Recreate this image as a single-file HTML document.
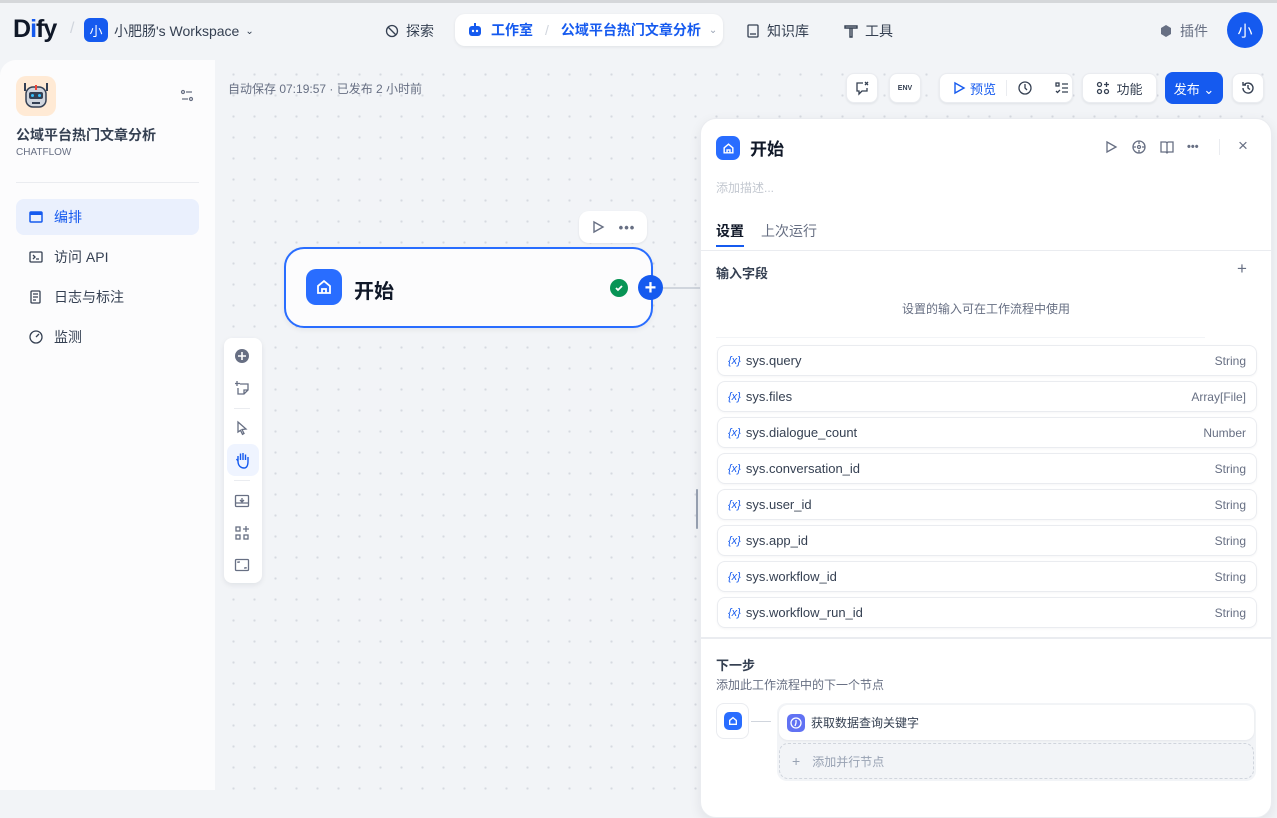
<!DOCTYPE html>
<html><head><meta charset="utf-8"><style>
*{box-sizing:border-box;margin:0;padding:0}
body{width:1277px;height:790px;overflow:hidden;background:#f2f4f7;font-family:"Liberation Sans","Noto Sans CJK SC",sans-serif;color:#101828;position:relative;font-size:13px}
.abs{position:absolute}
.topline{left:0;top:0;width:1277px;height:3px;background:#d5d7da}
.canvas{left:215px;top:60px;width:1062px;height:730px;background-color:#f2f4f7;background-image:radial-gradient(#d6d9e0 1px,transparent 1.3px);background-size:21px 21px;background-position:8px 4px}
.side{left:0;top:60px;width:215px;height:730px;background:#fcfcfd;border-top-left-radius:16px}
.btn{background:#fff;border-radius:8px;box-shadow:0 1px 2px rgba(16,24,40,.08);border:1px solid #eaecf0;display:flex;align-items:center;justify-content:center}
.panel{left:700px;top:118px;width:572px;height:700px;background:#fff;border-radius:16px;border:1px solid #eaecf0;box-shadow:0 4px 12px rgba(16,24,40,.08)}
.row{position:absolute;left:16px;width:540px;height:31px;border:1px solid #eaecf0;border-radius:8px;box-shadow:0 1px 2px rgba(16,24,40,.04);display:flex;align-items:center;padding:0 10px;font-size:13px;color:#354052}
.row .x{color:#155aef;font-size:11px;margin-right:5px;font-style:italic}
.row .t{margin-left:auto;color:#676f83;font-size:12px}
.nav{display:flex;align-items:center;gap:6px;font-size:14px;color:#354052}
.menu{position:absolute;left:16px;width:183px;height:36px;border-radius:8px;display:flex;align-items:center;padding-left:12px;font-size:14px;color:#354052;gap:10px}
</style></head><body>
<div class="abs topline"></div>
<div class="abs" style="left:13px;top:15px;font:bold 25px 'Liberation Sans',sans-serif;letter-spacing:-1px;color:#101828">D<span style="color:#155aef">i</span>fy</div>
<div class="abs" style="left:70px;top:20px;color:#d0d5dd;font-size:16px">/</div>
<div class="abs" style="left:84px;top:18px;width:24px;height:24px;border-radius:6px;background:#155aef;color:#fff;font-size:13px;display:flex;align-items:center;justify-content:center">小</div>
<div class="abs nav" style="left:114px;top:21px">小肥肠's Workspace <span style="font-size:10px">⌄</span></div>
<div class="abs nav" style="left:384px;top:21px"><svg width="16" height="16" viewBox="0 0 16 16" fill="none" stroke="#354052" stroke-width="1.3"><circle cx="8" cy="8" r="5.5"/><path d="M4 4l8 8"/></svg>探索</div>
<div class="abs" style="left:455px;top:14px;width:268px;height:32px;background:#fff;border-radius:10px;box-shadow:0 1px 3px rgba(16,24,40,.08);display:flex;align-items:center;padding-left:12px;gap:8px;color:#155aef;font-size:14px;font-weight:bold">
<svg width="16" height="16" viewBox="0 0 16 16"><rect x="2" y="4" width="12" height="10" rx="3" fill="#155aef"/><rect x="7" y="1" width="2" height="3" fill="#155aef"/><circle cx="6" cy="9" r="1.2" fill="#fff"/><circle cx="10" cy="9" r="1.2" fill="#fff"/></svg>工作室<span style="color:#d0d5dd;font-weight:normal;margin:0 4px">/</span>公域平台热门文章分析<span style="color:#98a2b3;font-size:10px;font-weight:normal">⌄</span></div>
<div class="abs nav" style="left:745px;top:21px"><svg width="16" height="16" viewBox="0 0 16 16" fill="none" stroke="#354052" stroke-width="1.3"><rect x="3" y="2" width="10" height="12" rx="1"/><path d="M5 11h6"/></svg>知识库</div>
<div class="abs nav" style="left:843px;top:21px"><svg width="16" height="16" viewBox="0 0 16 16" fill="none" stroke="#354052" stroke-width="1.4"><path d="M2 3h12v2H2zM7 5v9h2V5"/></svg>工具</div>
<div class="abs nav" style="left:1158px;top:21px;color:#676f83"><svg width="16" height="16" viewBox="0 0 16 16"><path d="M8 2l5 3v6l-5 3-5-3V5z" fill="#676f83"/></svg>插件</div>
<div class="abs" style="left:1227px;top:12px;width:36px;height:36px;border-radius:50%;background:#155aef;color:#fff;display:flex;align-items:center;justify-content:center;font-size:15px">小</div>

<div class="abs canvas"></div>
<div class="abs side"></div>
<div class="abs" style="left:16px;top:76px;width:40px;height:40px;border-radius:10px;background:#ffead5;display:flex;align-items:center;justify-content:center">
<svg width="28" height="30" viewBox="0 0 28 30"><rect x="4" y="6" width="20" height="20" rx="7" fill="#d0d5dd" stroke="#344054" stroke-width="1.5"/><rect x="7" y="11" width="14" height="7" rx="2" fill="#344054"/><circle cx="10.5" cy="14.5" r="1.5" fill="#36bffa"/><circle cx="17.5" cy="14.5" r="1.5" fill="#36bffa"/><rect x="13" y="4" width="2" height="5" fill="#f04438"/><rect x="2" y="2" width="2" height="8" fill="#344054"/><rect x="24" y="2" width="2" height="8" fill="#344054"/><rect x="10" y="21" width="8" height="2" fill="#344054"/></svg></div>
<svg class="abs" style="left:179px;top:88px" width="16" height="16" viewBox="0 0 16 16" fill="none" stroke="#676f83" stroke-width="1.2"><circle cx="4" cy="4" r="1.5"/><path d="M7 4h6M3 11h6"/><circle cx="12" cy="11" r="1.5"/></svg>
<div class="abs" style="left:16px;top:125px;font-size:14px;font-weight:bold;color:#354052">公域平台热门文章分析</div>
<div class="abs" style="left:16px;top:147px;font-size:10px;color:#676f83">CHATFLOW</div>
<div class="abs" style="left:16px;top:182px;width:183px;height:1px;background:#eaecf0"></div>
<div class="menu" style="top:199px;background:#eaf0fd;color:#155aef"><svg width="16" height="16" viewBox="0 0 16 16"><rect x="2" y="3" width="12" height="10" rx="1" fill="none" stroke="#155aef" stroke-width="1.5"/><rect x="2" y="3" width="12" height="3" fill="#155aef"/></svg>编排</div>
<div class="menu" style="top:239px"><svg width="16" height="16" viewBox="0 0 16 16" fill="none" stroke="#354052" stroke-width="1.3"><rect x="2" y="3" width="12" height="10" rx="1"/><path d="M5 6l2 2-2 2M8 10h3"/></svg>访问 API</div>
<div class="menu" style="top:279px"><svg width="16" height="16" viewBox="0 0 16 16" fill="none" stroke="#354052" stroke-width="1.3"><rect x="3" y="2" width="9" height="12" rx="1"/><path d="M5 5h5M5 8h5M5 11h3"/></svg>日志与标注</div>
<div class="menu" style="top:319px"><svg width="16" height="16" viewBox="0 0 16 16" fill="none" stroke="#354052" stroke-width="1.3"><circle cx="8" cy="8" r="6"/><path d="M8 8l3-3"/></svg>监测</div>

<div class="abs" style="left:228px;top:80px;font-size:12px;color:#676f83">自动保存 07:19:57 · 已发布 2 小时前</div>
<div class="abs btn" style="left:846px;top:73px;width:32px;height:30px"><svg width="16" height="16" viewBox="0 0 16 16" fill="none" stroke="#354052" stroke-width="1.3"><path d="M9 3H3v8h2v3l3-3h5V8"/><path d="M11 2l3 3M14 2l-3 3"/></svg></div>
<div class="abs btn" style="left:889px;top:73px;width:32px;height:30px;font-size:7px;font-weight:bold;color:#354052">ENV</div>
<div class="abs btn" style="left:939px;top:73px;width:134px;height:30px;justify-content:flex-start;padding-left:12px;color:#155aef;font-size:13px;gap:4px"><svg width="14" height="14" viewBox="0 0 14 14" fill="none" stroke="#155aef" stroke-width="1.4"><path d="M3 2l9 5-9 5z"/></svg>预览<span style="width:1px;height:16px;background:#eaecf0;margin:0 6px"></span><svg width="16" height="16" viewBox="0 0 16 16" fill="none" stroke="#354052" stroke-width="1.3"><circle cx="8" cy="8" r="6"/><path d="M8 4v4l2 2"/></svg><span style="width:14px"></span><svg width="14" height="14" viewBox="0 0 14 14" fill="none" stroke="#354052" stroke-width="1.3"><rect x="1" y="2" width="3" height="3"/><path d="M7 3h6M7 7h6M7 11h6M1 10l1.5 1.5L5 9"/></svg></div>
<div class="abs btn" style="left:1082px;top:73px;width:75px;height:30px;font-size:13px;color:#354052;gap:6px"><svg width="14" height="14" viewBox="0 0 14 14" fill="none" stroke="#354052" stroke-width="1.3"><circle cx="3.5" cy="3.5" r="2"/><circle cx="3.5" cy="10.5" r="2"/><circle cx="10.5" cy="10.5" r="2"/><path d="M10.5 1v5M8 3.5h5"/></svg>功能</div>
<div class="abs" style="left:1165px;top:72px;width:58px;height:32px;border-radius:8px;background:#155aef;color:#fff;font-size:13px;display:flex;align-items:center;justify-content:center">发布 ⌄</div>
<div class="abs btn" style="left:1232px;top:73px;width:32px;height:30px"><svg width="16" height="16" viewBox="0 0 16 16" fill="none" stroke="#354052" stroke-width="1.4"><path d="M3 8a5 5 0 1 0 1.5-3.5M3 2v3h3M8 5v3l2 1.5"/></svg></div>

<div class="abs btn" style="left:579px;top:211px;width:68px;height:32px;border-radius:10px;gap:14px;border:none"><svg width="14" height="14" viewBox="0 0 14 14" fill="none" stroke="#676f83" stroke-width="1.4"><path d="M3 2l9 5-9 5z"/></svg><span style="color:#676f83;font-weight:bold;letter-spacing:1px">•••</span></div>
<div class="abs" style="left:284px;top:247px;width:369px;height:81px;border:2px solid #296dff;border-radius:20px;background:#fcfcfd;box-shadow:0 2px 6px rgba(16,24,40,.06)"></div>
<div class="abs" style="left:306px;top:269px;width:36px;height:36px;border-radius:10px;background:#296dff;display:flex;align-items:center;justify-content:center"><svg width="18" height="18" viewBox="0 0 18 18" fill="none" stroke="#fff" stroke-width="1.8"><path d="M3 8l6-5 6 5v7H3z M7 15v-4h4v4"/></svg></div>
<div class="abs" style="left:354px;top:275px;font-size:20px;font-weight:bold">开始</div>
<div class="abs" style="left:610px;top:279px;width:18px;height:18px;border-radius:50%;background:#079455;display:flex;align-items:center;justify-content:center"><svg width="10" height="10" viewBox="0 0 10 10" fill="none" stroke="#fff" stroke-width="1.8"><path d="M2 5l2 2 4-4"/></svg></div>
<div class="abs" style="left:638px;top:275px;width:25px;height:25px;border-radius:50%;background:#155aef;color:#fff;display:flex;align-items:center;justify-content:center;font-size:20px;font-weight:bold;line-height:1">+</div>
<div class="abs" style="left:663px;top:287px;width:37px;height:2px;background:#d0d5dd"></div>

<div class="abs" style="left:224px;top:338px;width:38px;height:245px;background:#fff;border-radius:8px;box-shadow:0 2px 6px rgba(16,24,40,.08)"></div>
<svg class="abs" style="left:234px;top:348px" width="16" height="16"><circle cx="8" cy="8" r="7" fill="#676f83"/><path d="M8 4v8M4 8h8" stroke="#fff" stroke-width="1.6"/></svg>
<svg class="abs" style="left:234px;top:380px" width="16" height="16" fill="none" stroke="#676f83" stroke-width="1.3"><path d="M3 1v5M1 3.5h5M6 4h8v6l-4 4H4V8M10 14v-4h4"/></svg>
<div class="abs" style="left:234px;top:408px;width:16px;height:1px;background:#eaecf0"></div>
<svg class="abs" style="left:235px;top:420px" width="14" height="16" fill="none" stroke="#676f83" stroke-width="1.3"><path d="M3 2l8 7-4 .5 2 4-1.5.8-2-4L3 12z"/></svg>
<div class="abs" style="left:227px;top:444px;width:32px;height:32px;border-radius:8px;background:#eff4ff"></div>
<svg class="abs" style="left:234px;top:451px" width="16" height="18" fill="none" stroke="#155aef" stroke-width="1.4"><path d="M4 10V5M6.5 9V2.5M9 9V2M11.5 9V3.5M14 10V6M4 10c0 5 3 7 6 7s4-3 4-7"/><path d="M4 10L2.5 8"/></svg>
<div class="abs" style="left:234px;top:480px;width:16px;height:1px;background:#eaecf0"></div>
<svg class="abs" style="left:234px;top:493px" width="16" height="16" fill="none" stroke="#676f83" stroke-width="1.3"><rect x="1.5" y="2.5" width="13" height="11" rx="1"/><path d="M8 5v4M6 7l2 2 2-2M1.5 10h13"/></svg>
<svg class="abs" style="left:234px;top:525px" width="16" height="16" fill="none" stroke="#676f83" stroke-width="1.3"><rect x="2" y="2" width="4" height="4"/><rect x="2" y="10" width="4" height="4"/><rect x="10" y="10" width="4" height="4"/><path d="M12 1v6M9 4h6"/></svg>
<svg class="abs" style="left:234px;top:557px" width="16" height="16" fill="none" stroke="#676f83" stroke-width="1.3"><rect x="1.5" y="2.5" width="13" height="11" rx="1"/><path d="M4 6V5h2M12 10v1h-2"/></svg>
<div class="abs" style="left:696px;top:489px;width:2px;height:40px;background:#98a2b3;border-radius:1px"></div>

<div class="abs panel">
<div class="abs" style="left:15px;top:17px;width:24px;height:24px;border-radius:7px;background:#296dff;display:flex;align-items:center;justify-content:center"><svg width="13" height="13" viewBox="0 0 18 18" fill="none" stroke="#fff" stroke-width="2"><path d="M3 8l6-5 6 5v7H3z M7 15v-4h4v4"/></svg></div>
<div class="abs" style="left:49px;top:16px;font-size:17px;font-weight:bold">开始</div>
<svg class="abs" style="left:403px;top:21px" width="14" height="14" fill="none" stroke="#676f83" stroke-width="1.3"><path d="M3 2l9 5-9 5z"/></svg>
<svg class="abs" style="left:430px;top:20px" width="16" height="16" fill="none" stroke="#676f83" stroke-width="1.3"><circle cx="8" cy="8" r="6"/><circle cx="8" cy="8" r="1.5"/><path d="M8 2v3M8 11v3M2 8h3M11 8h3"/></svg>
<svg class="abs" style="left:458px;top:20px" width="16" height="16" fill="none" stroke="#676f83" stroke-width="1.3"><path d="M2 3h5l1 1 1-1h5v10H9l-1 1-1-1H2zM8 4v10"/></svg>
<div class="abs" style="left:486px;top:22px;color:#676f83;font-weight:bold;font-size:11px">•••</div>
<div class="abs" style="left:518px;top:20px;width:1px;height:16px;background:#eaecf0"></div>
<div class="abs" style="left:537px;top:17px;color:#676f83;font-size:17px">×</div>
<div class="abs" style="left:15px;top:60px;font-size:12px;color:#c3c8d0">添加描述...</div>
<div class="abs" style="left:15px;top:102px;font-size:14px;font-weight:bold;color:#101828">设置</div>
<div class="abs" style="left:15px;top:126px;width:28px;height:2px;background:#155aef"></div>
<div class="abs" style="left:60px;top:102px;font-size:14px;color:#676f83">上次运行</div>
<div class="abs" style="left:0;top:131px;width:570px;height:1px;background:#eaecf0"></div>
<div class="abs" style="left:15px;top:144px;font-size:13px;font-weight:bold;color:#354052">输入字段</div>
<div class="abs" style="left:536px;top:140px;font-size:17px;color:#676f83">+</div>
<div class="abs" style="left:0;top:181px;width:570px;text-align:center;font-size:12px;color:#676f83">设置的输入可在工作流程中使用</div>
<div class="abs" style="left:15px;top:218px;width:489px;height:1px;background:#f2f4f7"></div>
<div class="row" style="top:226px"><span class="x">{x}</span>sys.query<span class="t">String</span></div>
<div class="row" style="top:262px"><span class="x">{x}</span>sys.files<span class="t">Array[File]</span></div>
<div class="row" style="top:298px"><span class="x">{x}</span>sys.dialogue_count<span class="t">Number</span></div>
<div class="row" style="top:334px"><span class="x">{x}</span>sys.conversation_id<span class="t">String</span></div>
<div class="row" style="top:370px"><span class="x">{x}</span>sys.user_id<span class="t">String</span></div>
<div class="row" style="top:406px"><span class="x">{x}</span>sys.app_id<span class="t">String</span></div>
<div class="row" style="top:442px"><span class="x">{x}</span>sys.workflow_id<span class="t">String</span></div>
<div class="row" style="top:478px"><span class="x">{x}</span>sys.workflow_run_id<span class="t">String</span></div>
<div class="abs" style="left:0;top:518px;width:570px;height:2px;background:#eaecf0"></div>
<div class="abs" style="left:15px;top:536px;font-size:13px;font-weight:bold;color:#354052">下一步</div>
<div class="abs" style="left:15px;top:557px;font-size:12px;color:#676f83">添加此工作流程中的下一个节点</div>
<div class="abs" style="left:15px;top:584px;width:33px;height:36px;border:1px solid #eaecf0;border-radius:8px;display:flex;align-items:center;justify-content:center"><div style="width:18px;height:18px;border-radius:5px;background:#296dff;display:flex;align-items:center;justify-content:center"><svg width="10" height="10" viewBox="0 0 18 18" fill="none" stroke="#fff" stroke-width="2.4"><path d="M3 8l6-5 6 5v7H3z"/></svg></div></div>
<div class="abs" style="left:50px;top:602px;width:20px;height:1px;background:#d0d5dd"></div>
<div class="abs" style="left:76px;top:584px;width:479px;height:78px;background:#f2f4f7;border-radius:10px"></div>
<div class="abs" style="left:78px;top:586px;width:475px;height:35px;background:#fff;border-radius:9px;box-shadow:0 1px 2px rgba(16,24,40,.06);display:flex;align-items:center;padding-left:8px;gap:6px;font-size:12px;color:#354052"><span style="width:18px;height:18px;border-radius:5px;background:#6172f3;display:inline-flex;align-items:center;justify-content:center"><svg width="12" height="12" fill="none" stroke="#fff" stroke-width="1.3"><circle cx="6" cy="6" r="5"/><path d="M6 3v3l-1 3"/></svg></span>获取数据查询关键字</div>
<div class="abs" style="left:78px;top:624px;width:475px;height:36px;border:1px dashed #d0d5dd;border-radius:9px;display:flex;align-items:center;padding-left:12px;gap:12px;font-size:12px;color:#98a2b3"><span style="font-size:14px">+</span>添加并行节点</div>
</div>
</body></html>
